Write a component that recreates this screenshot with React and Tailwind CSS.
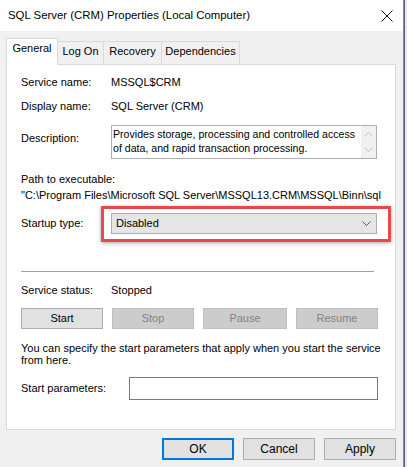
import React from 'react';

const Btn = ({ label, disabled, className = "" }) => (
  <div className={`flex items-center justify-center border ${disabled ? "border-[#bfbfbf] bg-[#cccccc] text-[#838383]" : "border-[#adadad] bg-[#e1e1e1] text-black"} ${className}`}>
    {label}
  </div>
);

const Chevron = ({ up, className = "" }) => (
  <svg width="9" height="5" viewBox="0 0 9 5" className={className}>
    <path d={up ? "M0.5 4.5 L4.5 0.5 L8.5 4.5" : "M0.5 0.5 L4.5 4.5 L8.5 0.5"} fill="none" stroke="currentColor" strokeWidth="1" />
  </svg>
);

const App = () => {
  return (
    <div className="w-[407px] h-[467px] flex bg-[#5a5a6a] overflow-hidden font-['Liberation_Sans',Arial,sans-serif] text-[11px] text-black">
      <div className="w-[404px] h-full shrink-0 border-r border-[#8a8a8a] bg-[#f0f0f0] flex flex-col">
        {/* title bar */}
        <div className="h-[31px] shrink-0 bg-white flex items-center justify-between pl-[8px] pr-[10px]">
          <span className="text-[11.4px]">SQL Server (CRM) Properties (Local Computer)</span>
          <svg width="12" height="12" viewBox="0 0 12 12">
            <path d="M0.5 0.5 L11.5 11.5 M11.5 0.5 L0.5 11.5" stroke="#111" strokeWidth="1" />
          </svg>
        </div>

        <div className="pl-[6px] pt-[7px]">
          {/* tabs */}
          <div className="h-[26px] flex items-end">
            <div className="relative z-10 h-[27px] -mb-px bg-white border border-b-0 border-[#d9d9d9] w-[52px] flex justify-center pt-[1px]">General</div>
            <div className="h-[23px] -ml-px border border-b-0 border-[#d9d9d9] w-[47px] flex items-center justify-center pb-[4px]">Log On</div>
            <div className="h-[23px] -ml-px border border-b-0 border-[#d9d9d9] w-[59px] flex items-center justify-center pb-[4px]">Recovery</div>
            <div className="h-[23px] -ml-px border border-b-0 border-[#d9d9d9] w-[79px] flex items-center justify-center pb-[4px]">Dependencies</div>
          </div>

          {/* panel */}
          <div className="w-[390px] h-[366px] bg-white border border-[#d9d9d9] pl-[14px] pt-[9px] flex flex-col">
            <div className="h-[16px] flex items-center">
              <span className="w-[90px]">Service name:</span>
              <span>MSSQL$CRM</span>
            </div>
            <div className="h-[16px] mt-[8px] flex items-center">
              <span className="w-[90px]">Display name:</span>
              <span>SQL Server (CRM)</span>
            </div>
            <div className="mt-[11px] flex">
              <span className="w-[90px] mt-[5px]">Description:</span>
              <div className="w-[266px] h-[34px] border border-[#abadb3] flex">
                <div className="flex-1 pl-[1px] pt-[1px] text-[10.6px] leading-[14px]">
                  Provides storage, processing and controlled access of data, and rapid transaction processing.
                </div>
                <div className="w-[15px] bg-[#f0f0f0] flex flex-col items-center justify-between py-[6px] text-[#c2c2c2]">
                  <Chevron up />
                  <Chevron />
                </div>
              </div>
            </div>
            <div className="h-[16px] mt-[12px] flex items-center">Path to executable:</div>
            <div className="h-[16px] flex items-center whitespace-nowrap">
              "C:\Program Files\Microsoft SQL Server\MSSQL13.CRM\MSSQL\Binn\sql
            </div>
            <div className="relative mt-[10px] h-[21px] flex items-center">
              <span className="w-[90px]">Startup type:</span>
              <div className="w-[266px] h-[21px] border border-[#adadad] bg-[#e5e5e5] flex items-center justify-between pl-[4px] pr-[5px]">
                <span>Disabled</span>
                <Chevron className="text-[#5a5a5a]" />
              </div>
              <div className="absolute left-[80px] top-[-7px] w-[290px] h-[36px] border-[3px] border-[#e8474c] shadow-[0_1px_4px_rgba(0,0,0,0.35)]"></div>
            </div>
            <div className="mt-[37px] w-[353px] h-px bg-[#a0a0a0]"></div>
            <div className="h-[16px] mt-[10px] flex items-center">
              <span className="w-[90px]">Service status:</span>
              <span>Stopped</span>
            </div>
            <div className="mt-[10px] flex gap-[9px] h-[21px]">
              <Btn label="Start" className="w-[82px]" />
              <Btn label="Stop" disabled className="w-[82px]" />
              <Btn label="Pause" disabled className="w-[84px]" />
              <Btn label="Resume" disabled className="w-[82px]" />
            </div>
            <div className="mt-[13px] w-[360px] leading-[12px]">
              You can specify the start parameters that apply when you start the service from here.
            </div>
            <div className="mt-[11px] h-[23px] flex items-center">
              <span className="w-[108px]">Start parameters:</span>
              <div className="w-[249px] h-[23px] border border-[#7a7a7a] bg-white"></div>
            </div>
          </div>
        </div>

        {/* bottom buttons */}
        <div className="mt-[8px] flex justify-end gap-[9px] pr-[7px] text-[12px]">
          <div className="w-[72px] h-[22px] border-2 border-[#0078d7] bg-[#e1e1e1] flex items-center justify-center">OK</div>
          <Btn label="Cancel" className="w-[72px] h-[22px]" />
          <Btn label="Apply" className="w-[72px] h-[22px]" />
        </div>
      </div>
      <div className="flex-1 bg-[#e8e8e8] border-l border-[#6b5a7a]"></div>
    </div>
  );
};

export default App;
